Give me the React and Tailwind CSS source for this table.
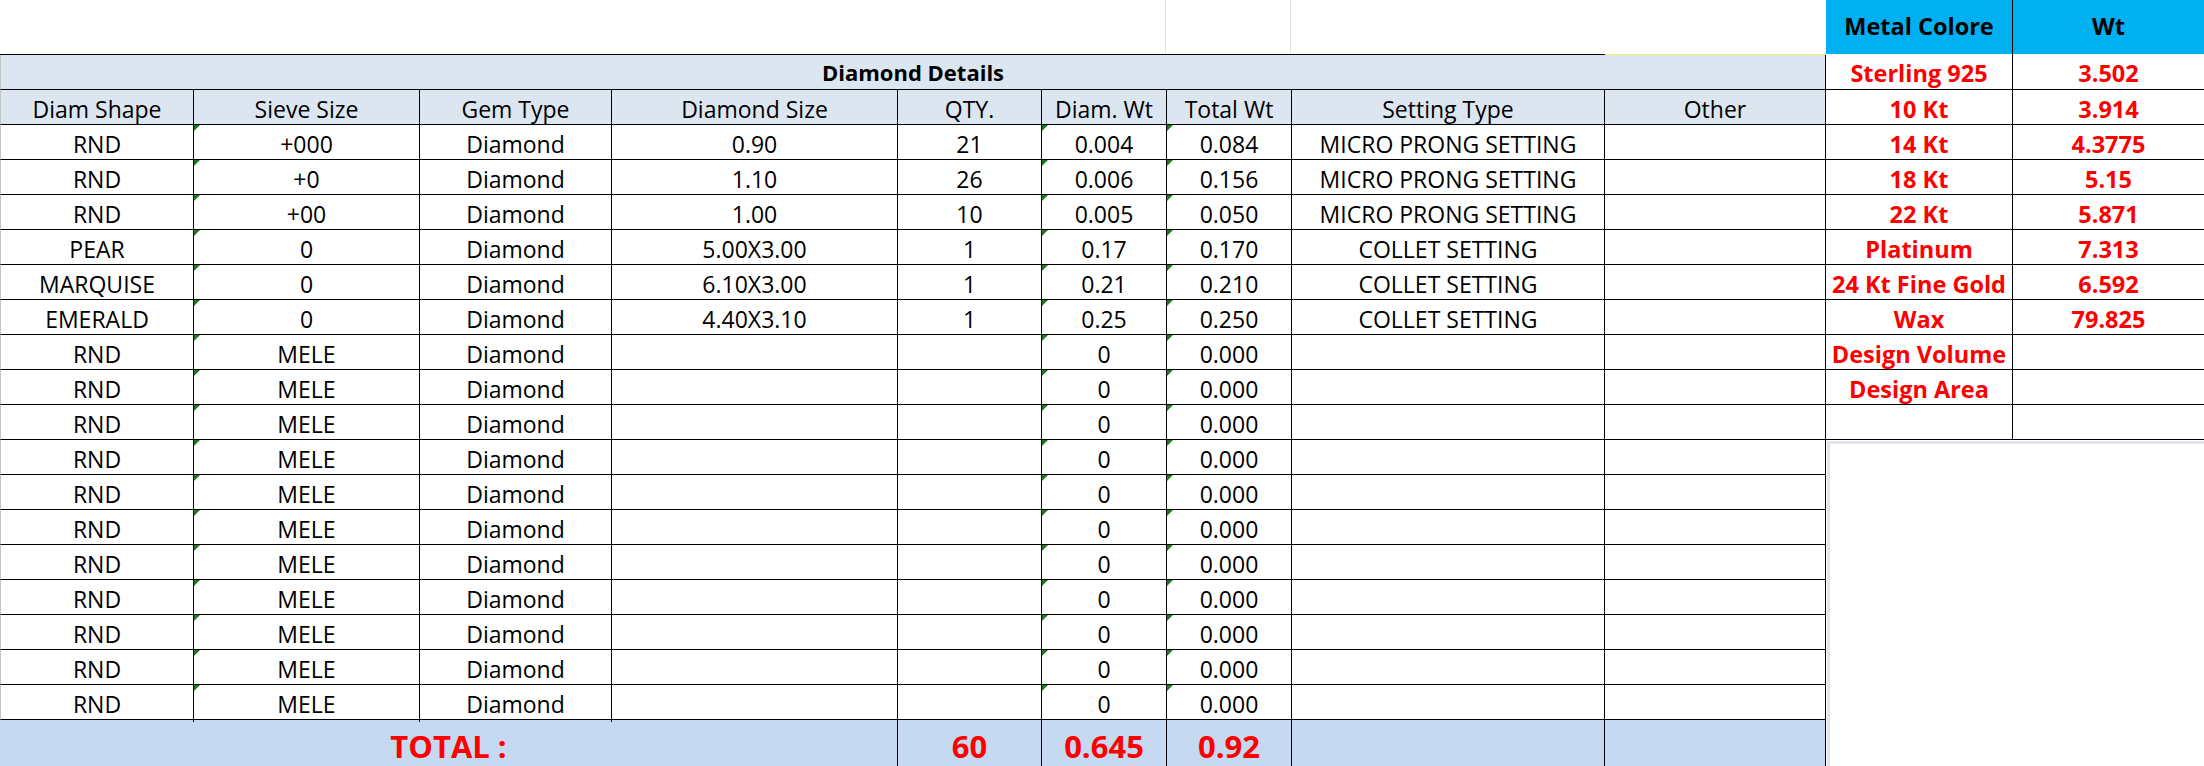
import React from "react";

const COLS =
  "grid shrink-0 grid-cols-[193px_226px_192px_286px_144px_125px_125px_313px_221px]";

const HEAD = [
  "Diam Shape",
  "Sieve Size",
  "Gem Type",
  "Diamond Size",
  "QTY.",
  "Diam. Wt",
  "Total Wt",
  "Setting Type",
  "Other",
];

const ROWS = [
  ["RND", "+000", "Diamond", "0.90", "21", "0.004", "0.084", "MICRO PRONG SETTING", ""],
  ["RND", "+0", "Diamond", "1.10", "26", "0.006", "0.156", "MICRO PRONG SETTING", ""],
  ["RND", "+00", "Diamond", "1.00", "10", "0.005", "0.050", "MICRO PRONG SETTING", ""],
  ["PEAR", "0", "Diamond", "5.00X3.00", "1", "0.17", "0.170", "COLLET SETTING", ""],
  ["MARQUISE", "0", "Diamond", "6.10X3.00", "1", "0.21", "0.210", "COLLET SETTING", ""],
  ["EMERALD", "0", "Diamond", "4.40X3.10", "1", "0.25", "0.250", "COLLET SETTING", ""],
  ...Array.from({ length: 11 }, () => ["RND", "MELE", "Diamond", "", "", "0", "0.000", "", ""]),
];

const METAL = [
  ["Sterling 925", "3.502"],
  ["10 Kt", "3.914"],
  ["14 Kt", "4.3775"],
  ["18 Kt", "5.15"],
  ["22 Kt", "5.871"],
  ["Platinum", "7.313"],
  ["24 Kt Fine Gold", "6.592"],
  ["Wax", "79.825"],
  ["Design Volume", ""],
  ["Design Area", ""],
  ["", ""],
];

const TRI = new Set([1, 5, 6]);

function Cell({ children, tri }) {
  return (
    <div className="relative flex h-full items-center justify-center whitespace-nowrap border-r border-black pt-[2px]">
      {tri && (
        <span className="absolute left-0 top-0 h-0 w-0 border-t-[6px] border-r-[6px] border-t-[#1f7a1f] border-r-transparent" />
      )}
      {children}
    </div>
  );
}

export default function App() {
  return (
    <div className="flex h-[766px] w-[2204px] items-start overflow-hidden bg-white font-['Open_Sans',sans-serif] text-[23px] text-black">
      {/* main table */}
      <div className="flex w-[1826px] shrink-0 flex-col">
        {/* empty sheet area above */}
        <div className={`${COLS} h-[54px]`}>
          <div />
          <div />
          <div />
          <div />
          <div />
          <div className="border-r border-[#e4e4e4]" />
          <div className="border-r border-[#e4e4e4]" />
          <div />
          <div />
        </div>
        {/* top border */}
        <div className="flex h-[1px] shrink-0">
          <div className="w-[1605px] bg-black" />
          <div className="w-[221px] bg-[#f3ee6a]" />
        </div>
        <div className="flex h-[35px] shrink-0 items-center justify-center border-b border-l border-r border-b-black border-l-[#c4c4c4] border-r-black bg-[#dce6f1] pt-[1px] text-[22px] font-bold">
          Diamond Details
        </div>
        <div className={`${COLS} h-[35px] border-b border-l border-b-black border-l-[#c4c4c4] bg-[#dce6f1]`}>
          {HEAD.map((h, i) => (
            <Cell key={i}>{h}</Cell>
          ))}
        </div>
        {ROWS.map((r, ri) => (
          <div
            key={ri}
            className={`${COLS} h-[35px] border-b border-l border-b-black border-l-[#c4c4c4]`}
          >
            {r.map((c, ci) => (
              <Cell key={ci} tri={TRI.has(ci)}>
                {c}
              </Cell>
            ))}
          </div>
        ))}
        <div className="grid h-[52px] shrink-0 grid-cols-[898px_144px_125px_125px_313px_221px] bg-[#c5d9f1] text-[31px] font-bold text-[#ff0000]">
          <div className="flex items-center justify-center border-r border-black">TOTAL :</div>
          <div className="flex items-center justify-center border-r border-black">60</div>
          <div className="flex items-center justify-center border-r border-black">0.645</div>
          <div className="flex items-center justify-center border-r border-black">0.92</div>
          <div className="border-r border-black" />
          <div className="border-r border-black" />
        </div>
      </div>

      {/* metal table */}
      <div className="flex h-[766px] w-[378px] shrink-0 flex-col">
        <div className="grid h-[54px] shrink-0 grid-cols-[187px_191px] bg-[#00b0f0] text-[23.5px] font-bold">
          <div className="flex items-center justify-center whitespace-nowrap border-r border-black">Metal Colore</div>
          <div className="flex items-center justify-center">Wt</div>
        </div>
        {METAL.map(([a, b], i) => (
          <div
            key={i}
            className={`grid shrink-0 ${i === 0 ? "h-[36px]" : "h-[35px]"} grid-cols-[187px_191px] border-b border-black text-[23.5px] font-bold text-[#ff0000]`}
          >
            <div className="flex items-center justify-center whitespace-nowrap border-r border-black pt-[2px]">
              {a}
            </div>
            <div className="flex items-center justify-center pt-[2px]">{b}</div>
          </div>
        ))}
        <div className="ml-[1px] mt-[1px] flex-1 border-l-[3px] border-t-[3px] border-[#e3e3f2]" />
      </div>
    </div>
  );
}
